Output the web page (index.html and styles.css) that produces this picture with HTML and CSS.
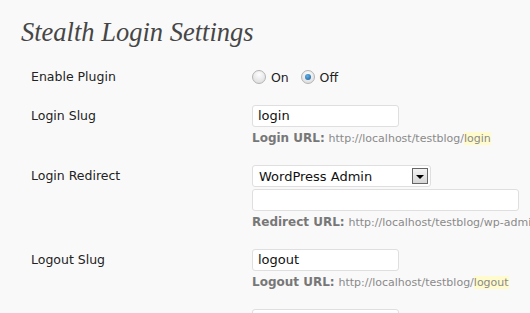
FILE: index.html
```html
<!DOCTYPE html>
<html lang="en">
<head>
  <meta charset="UTF-8" />
  <title>Stealth Login Settings</title>
  <link rel="stylesheet" href="styles.css">
</head>
<body>
  <div class="wrap">
    <h2 class="title">Stealth Login Settings</h2>

    <!-- Enable Plugin -->
    <div class="row row-radio">
      <div class="label">Enable Plugin</div>
      <div class="field">
        <label class="radio"><span class="dot"></span>On</label>
        <label class="radio"><span class="dot checked"></span>Off</label>
      </div>
    </div>

    <!-- Login Slug -->
    <div class="row">
      <div class="label">Login Slug</div>
      <div class="field">
        <div class="input small">login</div>
        <p class="desc"><b>Login URL:</b> <span class="url">http://localhost/testblog/<span class="hl">login</span></span></p>
      </div>
    </div>

    <!-- Login Redirect -->
    <div class="row">
      <div class="label">Login Redirect</div>
      <div class="field">
        <div class="select">WordPress Admin<span class="arrow"></span></div>
        <div class="input wide"></div>
        <p class="desc"><b>Redirect URL:</b> <span class="url">http://localhost/testblog/wp-admin/</span></p>
      </div>
    </div>

    <!-- Logout Slug -->
    <div class="row">
      <div class="label">Logout Slug</div>
      <div class="field">
        <div class="input small">logout</div>
        <p class="desc"><b>Logout URL:</b> <span class="url">http://localhost/testblog/<span class="hl">logout</span></span></p>
      </div>
    </div>

    <div class="row">
      <div class="label"></div>
      <div class="field">
        <div class="input small"></div>
      </div>
    </div>
  </div>
</body>
</html>
```
FILE: styles.css
```css
body {
  margin: 0;
  background-color: #f9f9f9;
  color: #333;
  font-family: 'DejaVu Sans', Verdana, sans-serif;
  font-size: 12px;
  overflow: hidden;
}
.wrap {
  padding: 0 0 0 21px;
  white-space: nowrap;
}
h2.title {
  margin: 0;
  padding: 17px 0 0 0;
  height: 32px;
  font-family: 'Liberation Serif', Georgia, serif;
  font-style: italic;
  font-weight: normal;
  font-size: 26.5px;
  line-height: 30px;
  color: #464646;
}
.row {
  display: flex;
  padding: 0 0 18px 0;
}
.row-radio {
  padding: 17px 0 17px 0;
}
.label {
  width: 221px;
  padding-left: 10px;
  line-height: 22px;
  font-size: 12.5px;
  color: #222;
  flex: none;
}
.field {
  flex: none;
}
.radio {
  display: inline-flex;
  align-items: center;
  height: 22px;
  margin-right: 8px;
  font-size: 12.5px;
  color: #222;
}
.dot {
  width: 12px;
  height: 12px;
  border: 1px solid #b4b4b4;
  border-radius: 50%;
  background: radial-gradient(circle at 50% 30%, #fdfdfd, #d8d8d8);
  margin-right: 5px;
  position: relative;
}
.dot.checked::after {
  content: '';
  position: absolute;
  left: 3px;
  top: 3px;
  width: 6px;
  height: 6px;
  border-radius: 50%;
  background: radial-gradient(circle at 40% 35%, #5fb0e8, #1b5a96);
}
.input {
  box-sizing: border-box;
  height: 22px;
  border: 1px solid #dfdfdf;
  border-radius: 3px;
  background: #fff;
  padding: 0 5px;
  font-size: 13px;
  line-height: 20px;
  color: #111;
}
.input.small {
  width: 147px;
}
.input.wide {
  width: 267px;
  margin-top: 2px;
}
.select {
  box-sizing: border-box;
  display: flex;
  align-items: center;
  justify-content: space-between;
  width: 179px;
  height: 22px;
  border: 1px solid #dfdfdf;
  border-radius: 3px;
  background: #fff;
  padding: 0 2px 0 6px;
  font-size: 13px;
  color: #111;
}
.arrow {
  box-sizing: border-box;
  width: 16px;
  height: 16px;
  border: 1px solid #666;
  background: linear-gradient(#f4f4f4, #d6d6d6);
  position: relative;
}
.arrow::after {
  content: '';
  position: absolute;
  left: 3px;
  top: 6px;
  border-left: 4px solid transparent;
  border-right: 4px solid transparent;
  border-top: 4px solid #000;
}
.desc {
  margin: 3px 0 0 0;
  line-height: 16px;
  color: #777;
}
.desc b {
  font-size: 12px;
}
.url {
  font-size: 11px;
  color: #8a8a8a;
}
.hl {
  background-color: #fffbcc;
}
```
